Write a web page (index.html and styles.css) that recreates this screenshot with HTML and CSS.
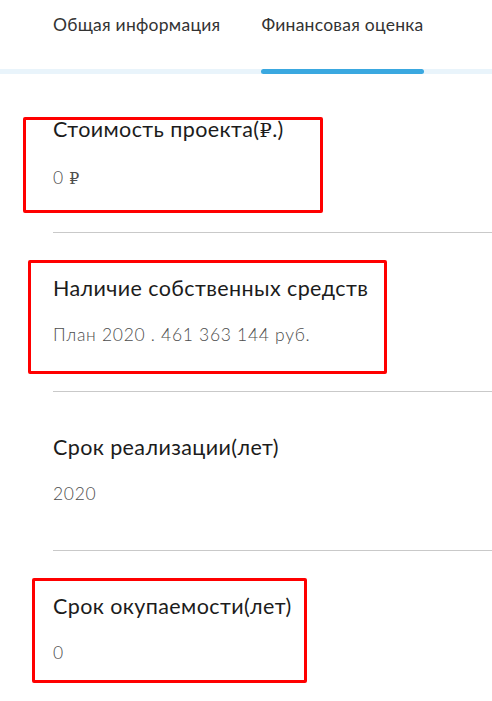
FILE: index.html
```html
<!DOCTYPE html>
<html>
  <head>
    <title>Финансовая оценка</title>
    <link rel="stylesheet" href="styles.css">
  </head>
  <body>
    <div class="page">
      <div class="tabs">
        <div class="tab">Общая информация</div>
        <div class="tab active">Финансовая оценка</div>
      </div>

      <div class="item">
        <div class="item-title">Стоимость проекта(<span class="rub">₽</span>.)</div>
        <div class="item-value">0 <span class="rub">₽</span></div>
      </div>
      <div class="item">
        <div class="item-title">Наличие собственных средств</div>
        <div class="item-value">План 2020 . 461 363 144 руб.</div>
      </div>
      <div class="item">
        <div class="item-title">Срок реализации(лет)</div>
        <div class="item-value">2020</div>
      </div>
      <div class="item">
        <div class="item-title">Срок окупаемости(лет)</div>
        <div class="item-value">0</div>
      </div>

      <div class="mark mark-1"></div>
      <div class="mark mark-2"></div>
      <div class="mark mark-3"></div>
    </div>
  </body>
</html>
```

FILE: styles.css
```css
body {
  margin: 0;
  padding: 0;
  background-color: #fff;
  font-family: Lato, "Noto Sans", sans-serif;
}
.page {
  position: relative;
  overflow: hidden;
  height: 701px;
}
.tabs {
  display: flex;
  gap: 41px;
  padding-left: 53px;
  height: 74px;
  background: linear-gradient(to top, #e9f4fb 5px, transparent 5px);
}
.tab {
  display: flex;
  flex-direction: column;
  justify-content: space-between;
  padding-top: 14px;
  font-size: 17.5px;
  line-height: 22px;
  letter-spacing: 0.25px;
  color: #333;
}
.tab.active::after {
  content: "";
  display: block;
  height: 5px;
  border-radius: 3px;
  background-color: #3aa8e0;
}
.item {
  box-sizing: border-box;
  height: 159px;
  margin-left: 53px;
  padding-top: 43px;
  border-bottom: 1px solid #c9c9c9;
}
.item-title {
  font-size: 21.5px;
  line-height: 24px;
  letter-spacing: 0.4px;
  color: #1c1c1c;
}
.item-value {
  margin-top: 25px;
  font-size: 17.5px;
  font-weight: 300;
  line-height: 20px;
  letter-spacing: 0.7px;
  color: #4d4d4d;
}
.rub {
  font-family: "DejaVu Serif", serif;
  font-size: 0.9em;
}
.mark {
  position: absolute;
  box-sizing: border-box;
  border: 3px solid #f00;
  border-radius: 2px;
}
.mark-1 {
  left: 23px;
  top: 117px;
  width: 300px;
  height: 96px;
}
.mark-2 {
  left: 28px;
  top: 260px;
  width: 359px;
  height: 114px;
}
.mark-3 {
  left: 32px;
  top: 578px;
  width: 275px;
  height: 105px;
}
```
